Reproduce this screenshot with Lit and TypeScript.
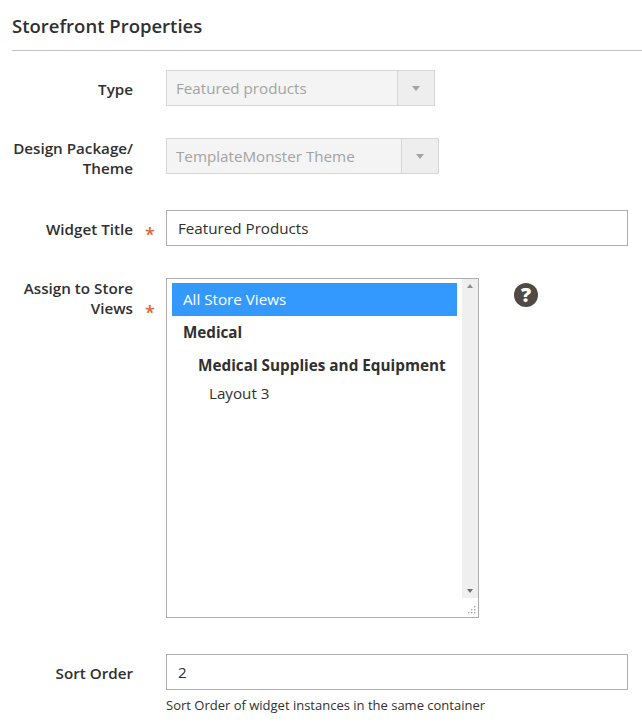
import { LitElement, html, css } from 'lit';
import { customElement } from 'lit/decorators.js';

@customElement('app-root')
export class AppRoot extends LitElement {
  static styles = css`
    :host {
      display: block;
      font-family: 'Open Sans', sans-serif;
      font-size: 15.2px;
      line-height: 20px;
      color: #303030;
      background: #fff;
      height: 726px;
      overflow: hidden;
    }
    .title {
      margin: 0;
      margin-left: 12px;
      padding-top: 14px;
      height: 36px;
      box-sizing: border-box;
      font-size: 18.5px;
      line-height: 24px;
      font-weight: 600;
    }
    .rule {
      margin: 14px 0 19px 12px;
      border-top: 1px solid #c4c2bf;
    }
    .row {
      display: grid;
      grid-template-columns: 133px 33px 1fr;
      margin-bottom: 32px;
    }
    .row.last {
      margin-top: 36px;
    }
    .label {
      text-align: right;
      font-weight: 600;
      padding-top: 9px;
    }
    .label.top {
      padding-top: 0;
    }
    .req {
      color: #e0652b;
      font-weight: 600;
      font-size: 18px;
      padding: 14px 0 0 12px;
    }
    .req.low {
      padding-top: 24px;
    }
    .select {
      display: flex;
      box-sizing: border-box;
      height: 36px;
      background: #f4f4f4;
      border: 1px solid #d6d6d6;
      color: #a3a3a3;
    }
    .select.type {
      width: 269px;
    }
    .select.design {
      width: 273px;
    }
    .select .value {
      flex: 1;
      padding: 7px 9px;
    }
    .select .arrow {
      width: 36px;
      border-left: 1px solid #d6d6d6;
      background: #eeeeee;
      display: flex;
      align-items: center;
      justify-content: center;
    }
    .arrow i {
      width: 0;
      height: 0;
      border: 4.5px solid transparent;
      border-top: 5px solid #a3a3a3;
      border-bottom: 0;
    }
    .input {
      box-sizing: border-box;
      width: 462px;
      height: 36px;
      border: 1px solid #adadad;
      padding: 7px 11px;
      color: #303030;
    }
    .views {
      display: flex;
    }
    .list {
      display: flex;
      box-sizing: border-box;
      width: 313px;
      height: 340px;
      border: 1px solid #adadad;
      position: relative;
    }
    .options {
      flex: 1;
      padding: 4px 5px;
    }
    .option {
      height: 33px;
      line-height: 33px;
      padding-left: 11px;
    }
    .option.selected {
      background: #3399ff;
      color: #fff;
    }
    .option.group {
      font-weight: 700;
    }
    .option.sub {
      padding-left: 26px;
      font-size: 15.3px;
    }
    .option.leaf {
      padding-left: 37px;
      height: 22px;
      line-height: 22px;
    }
    .track {
      width: 16px;
      height: 319px;
      background: #efefef;
      display: flex;
      flex-direction: column;
      justify-content: space-between;
      align-items: center;
      padding: 5px 0;
      box-sizing: border-box;
    }
    .track i {
      width: 0;
      height: 0;
      border: 3.5px solid transparent;
    }
    .track .up {
      border-top: 0;
      border-bottom: 4px solid #8f8f8f;
    }
    .track .down {
      border-bottom: 0;
      border-top: 4px solid #6f6f6f;
    }
    .grip {
      position: absolute;
      right: 1px;
      bottom: 1px;
    }
    .help {
      width: 24px;
      height: 24px;
      margin: 5px 0 0 35px;
      border-radius: 50%;
      background: #514943;
      color: #fff;
      font-weight: 800;
      font-size: 20px;
      line-height: 24px;
      text-align: center;
    }
    .note {
      font-size: 13px;
      line-height: 18px;
      margin-top: 6px;
      color: #303030;
    }
  `;

  render() {
    return html`
      <h2 class="title">Storefront Properties</h2>
      <div class="rule"></div>

      <div class="row">
        <div class="label">Type</div>
        <div></div>
        <div class="select type">
          <div class="value">Featured products</div>
          <div class="arrow"><i></i></div>
        </div>
      </div>

      <div class="row">
        <div class="label top">Design Package/<br />Theme</div>
        <div></div>
        <div class="select design">
          <div class="value">TemplateMonster Theme</div>
          <div class="arrow"><i></i></div>
        </div>
      </div>

      <div class="row">
        <div class="label">Widget Title</div>
        <div class="req">*</div>
        <div class="input">Featured Products</div>
      </div>

      <div class="row">
        <div class="label top">Assign to Store<br />Views</div>
        <div class="req low">*</div>
        <div class="views">
          <div class="list">
            <div class="options">
              <div class="option selected">All Store Views</div>
              <div class="option group">Medical</div>
              <div class="option group sub">Medical Supplies and Equipment</div>
              <div class="option leaf">Layout 3</div>
            </div>
            <div class="track"><i class="up"></i><i class="down"></i></div>
            <svg class="grip" width="12" height="12" viewBox="0 0 12 12" fill="#a8a8a8">
              <rect x="9" y="2" width="1.4" height="1.4" />
              <rect x="6" y="5" width="1.4" height="1.4" />
              <rect x="9" y="5" width="1.4" height="1.4" />
              <rect x="3" y="8" width="1.4" height="1.4" />
              <rect x="6" y="8" width="1.4" height="1.4" />
              <rect x="9" y="8" width="1.4" height="1.4" />
            </svg>
          </div>
          <div class="help">?</div>
        </div>
      </div>

      <div class="row last">
        <div class="label">Sort Order</div>
        <div></div>
        <div>
          <div class="input">2</div>
          <div class="note">Sort Order of widget instances in the same container</div>
        </div>
      </div>
    `;
  }
}

declare global {
  interface HTMLElementTagNameMap {
    'app-root': AppRoot;
  }
}
